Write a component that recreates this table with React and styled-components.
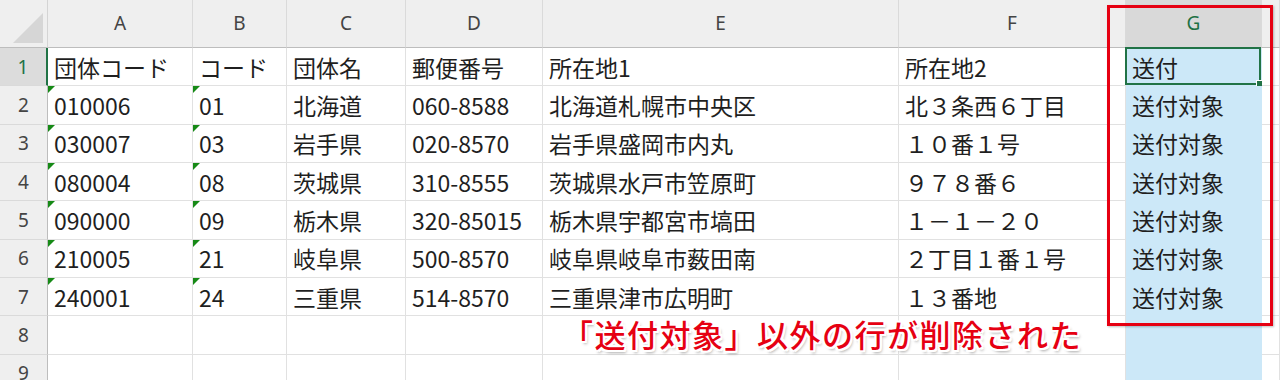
import React from 'react';
import styled, { createGlobalStyle } from 'styled-components';

const GlobalStyle = createGlobalStyle`
  html, body {
    margin: 0;
    padding: 0;
    background: #ffffff;
    overflow: hidden;
  }
`;

const columns = [
  { key: 'A', width: 145 },
  { key: 'B', width: 94 },
  { key: 'C', width: 119 },
  { key: 'D', width: 137 },
  { key: 'E', width: 356 },
  { key: 'F', width: 227 },
  { key: 'G', width: 136 },
];

const header = ['団体コード', 'コード', '団体名', '郵便番号', '所在地1', '所在地2', '送付'];

const rows = [
  ['010006', '01', '北海道', '060-8588', '北海道札幌市中央区', '北３条西６丁目', '送付対象'],
  ['030007', '03', '岩手県', '020-8570', '岩手県盛岡市内丸', '１０番１号', '送付対象'],
  ['080004', '08', '茨城県', '310-8555', '茨城県水戸市笠原町', '９７８番６', '送付対象'],
  ['090000', '09', '栃木県', '320-85015', '栃木県宇都宮市塙田', '１－１－２０', '送付対象'],
  ['210005', '21', '岐阜県', '500-8570', '岐阜県岐阜市薮田南', '２丁目１番１号', '送付対象'],
  ['240001', '24', '三重県', '514-8570', '三重県津市広明町', '１３番地', '送付対象'],
  ['', '', '', '', '', '', ''],
  ['', '', '', '', '', '', ''],
];

const Page = styled.div`
  position: relative;
  width: 1280px;
  height: 380px;
  overflow: hidden;
  font-family: "Noto Sans CJK JP", "Noto Sans", sans-serif;
`;

const Sheet = styled.div`
  display: grid;
  grid-template-columns: 48px ${columns.map((c) => `${c.width}px`).join(' ')} 1fr;
  grid-template-rows: 48px repeat(9, 38.35px);
`;

const Corner = styled.div`
  position: relative;
  background: #efefef;
  border-right: 1px solid #d4d4d4;
  border-bottom: 1px solid #bdbdbd;
  box-sizing: border-box;

  &::after {
    content: '';
    position: absolute;
    right: 4px;
    bottom: 4px;
    width: 0;
    height: 0;
    border-left: 30px solid transparent;
    border-bottom: 30px solid #d6d6d6;
  }
`;

const ColHead = styled.div`
  display: flex;
  align-items: center;
  justify-content: center;
  background: ${(p) => (p.$active ? '#d9d9d9' : '#efefef')};
  color: ${(p) => (p.$active ? '#1e7145' : '#444444')};
  border-right: 1px solid #dadada;
  border-bottom: 1px solid #bdbdbd;
  box-sizing: border-box;
  font-family: "Noto Sans", sans-serif;
  font-size: 19px;
  padding-bottom: 2px;
`;

const RowHead = styled.div`
  display: flex;
  align-items: center;
  justify-content: center;
  background: ${(p) => (p.$active ? '#dcdcdc' : '#efefef')};
  color: ${(p) => (p.$active ? '#1e7145' : '#444444')};
  border-right: ${(p) => (p.$active ? '2px solid #217346' : '1px solid #bdbdbd')};
  border-bottom: 1px solid #dadada;
  box-sizing: border-box;
  font-family: "Noto Sans", sans-serif;
  font-size: 19px;
`;

const Cell = styled.div`
  position: relative;
  display: flex;
  align-items: center;
  padding-left: 6px;
  background: ${(p) => (p.$fill ? '#cce8f8' : '#ffffff')};
  border-right: 1px solid ${(p) => (p.$fill ? '#cce8f8' : '#e1e1e1')};
  border-bottom: 1px solid ${(p) => (p.$fill ? '#cce8f8' : '#e1e1e1')};
  box-sizing: border-box;
  color: #1f1f1f;
  font-size: 23px;
  white-space: nowrap;
  overflow: visible;
`;

const TextFlag = styled.span`
  position: absolute;
  left: 0;
  top: 0;
  width: 0;
  height: 0;
  border-top: 7px solid #168a16;
  border-right: 7px solid transparent;
`;

const Selection = styled.span`
  position: absolute;
  inset: -1px 0 0 -1px;
  border: 2px solid #217346;
  pointer-events: none;

  &::after {
    content: '';
    position: absolute;
    right: -5px;
    bottom: -5px;
    width: 6px;
    height: 6px;
    background: #217346;
    border: 1px solid #ffffff;
  }
`;

const Highlight = styled.div`
  position: absolute;
  left: 1107px;
  top: 5px;
  width: 166px;
  height: 321px;
  border: 3.5px solid #e60012;
  box-sizing: border-box;
  box-shadow: 1px 1px 2px rgba(0, 0, 0, 0.25);
`;

const Note = styled.div`
  position: absolute;
  left: 562px;
  top: 311px;
  color: #e60012;
  font-size: 31px;
  font-weight: 500;
  letter-spacing: 1.5px;
  white-space: nowrap;
  text-shadow:
    -2px 0 #fff, 2px 0 #fff, 0 -2px #fff, 0 2px #fff,
    -2px -2px #fff, 2px 2px #fff, -2px 2px #fff, 2px -2px #fff,
    2px 3px 3px rgba(0, 0, 0, 0.35);
`;

function App() {
  return (
    <Page>
      <GlobalStyle />
      <Sheet>
        <Corner />
        {columns.map((c) => (
          <ColHead key={c.key} $active={c.key === 'G'}>{c.key}</ColHead>
        ))}
        <ColHead />

        <RowHead $active>1</RowHead>
        {header.map((h, i) => (
          <Cell key={h} $fill={i === 6}>
            {h}
            {i === 6 && <Selection />}
          </Cell>
        ))}
        <Cell />

        {rows.map((r, ri) => (
          <React.Fragment key={ri}>
            <RowHead>{ri + 2}</RowHead>
            {r.map((v, ci) => (
              <Cell key={ci} $fill={ci === 6}>
                {ci < 2 && v && <TextFlag />}
                {v}
              </Cell>
            ))}
            <Cell />
          </React.Fragment>
        ))}
      </Sheet>
      <Highlight />
      <Note>「送付対象」以外の行が削除された</Note>
    </Page>
  );
}

export default App;
